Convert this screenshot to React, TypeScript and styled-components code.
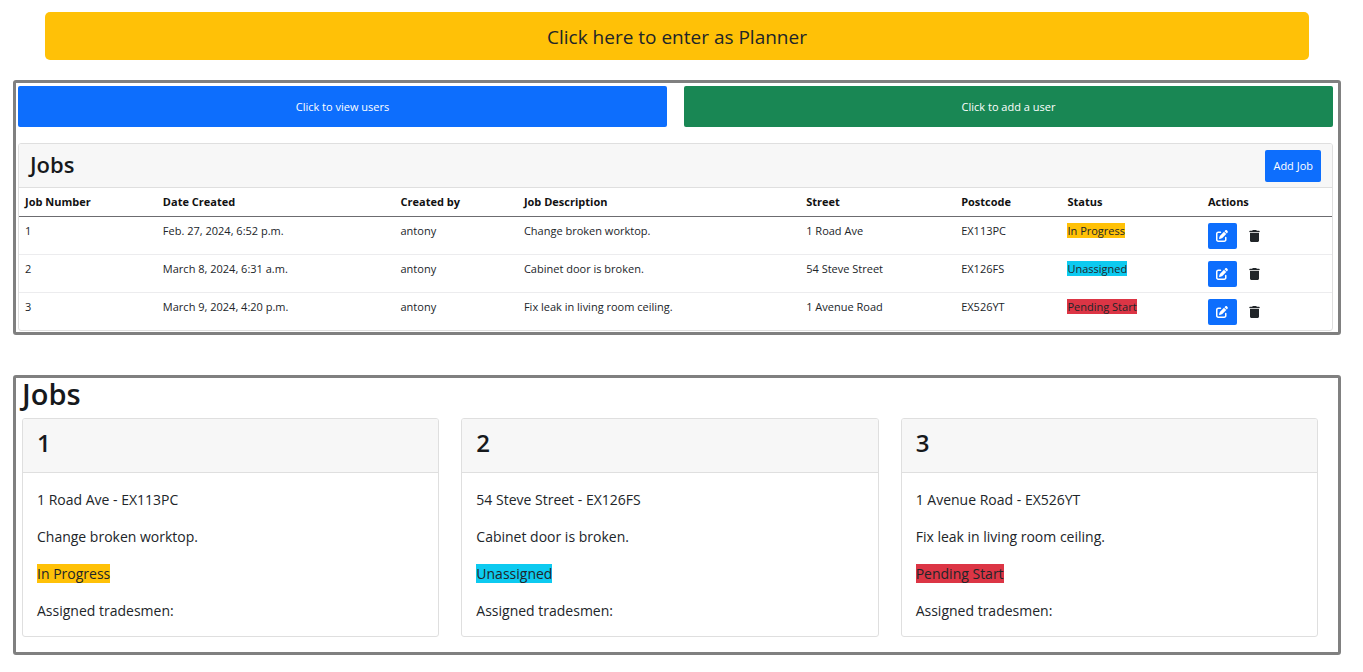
import React from "react";
import styled, { createGlobalStyle } from "styled-components";

const GlobalStyle = createGlobalStyle`
  *, *::before, *::after { box-sizing: border-box; }
  body {
    margin: 0;
    background: #fff;
    color: #212529;
    font-family: "Open Sans", "Noto Sans", sans-serif;
    font-size: 14px;
    line-height: 22px;
  }
  h1, h2, h3, p { margin: 0; }
  h1, h2, h3 { color: #16191c; font-weight: 600; }
  button { font-family: inherit; cursor: pointer; }
`;

type Status = "In Progress" | "Unassigned" | "Pending Start";

interface Job {
  id: number;
  created: string;
  by: string;
  description: string;
  street: string;
  postcode: string;
  status: Status;
}

const jobs: Job[] = [
  { id: 1, created: "Feb. 27, 2024, 6:52 p.m.", by: "antony", description: "Change broken worktop.", street: "1 Road Ave", postcode: "EX113PC", status: "In Progress" },
  { id: 2, created: "March 8, 2024, 6:31 a.m.", by: "antony", description: "Cabinet door is broken.", street: "54 Steve Street", postcode: "EX126FS", status: "Unassigned" },
  { id: 3, created: "March 9, 2024, 4:20 p.m.", by: "antony", description: "Fix leak in living room ceiling.", street: "1 Avenue Road", postcode: "EX526YT", status: "Pending Start" },
];

const columns = [
  { label: "Job Number", width: "10.5%" },
  { label: "Date Created", width: "18.1%" },
  { label: "Created by", width: "9.4%" },
  { label: "Job Description", width: "21.5%" },
  { label: "Street", width: "11.8%" },
  { label: "Postcode", width: "8.1%" },
  { label: "Status", width: "10.7%" },
  { label: "Actions", width: "9.9%" },
];

const statusColors: Record<Status, string> = {
  "In Progress": "#ffc107",
  Unassigned: "#0dcaf0",
  "Pending Start": "#dc3545",
};

const Page = styled.main`
  display: flex;
  flex-direction: column;
  padding: 12px 22px 17px 13px;
`;

const PlannerButton = styled.button`
  height: 48px;
  margin: 0 32px 20px;
  padding: 2px 16px 0;
  border: 0;
  border-radius: 5px;
  background: #ffc107;
  color: #212529;
  font-size: 19px;
`;

const Frame = styled.section`
  border: 3px solid #808080;
  border-radius: 3px;
`;

const AdminFrame = styled(Frame)`
  margin-bottom: 40px;
  padding: 3px 5px 1px 2px;
`;

const BoardFrame = styled(Frame)`
  padding: 0 20px 15px 6px;
`;

const UserActions = styled.div`
  display: grid;
  grid-template-columns: 1fr 1fr;
  gap: 17px;
  margin-bottom: 16px;
`;

const SolidButton = styled.button<{ $color: string }>`
  border: 0;
  border-radius: 2px;
  background: ${(p) => p.$color};
  color: #fff;
  font-size: 11px;
`;

const WideButton = styled(SolidButton)`
  height: 41px;
`;

const AddButton = styled(SolidButton)`
  height: 32px;
  padding: 0 8px;
`;

const Card = styled.article`
  border: 1px solid #dfdfdf;
  border-radius: 3px;
  overflow: hidden;
`;

const TableHeader = styled.header`
  display: flex;
  align-items: center;
  justify-content: space-between;
  height: 44px;
  padding: 0 11px;
  border-bottom: 1px solid #dfdfdf;
  background: #f7f7f7;
`;

const TableTitle = styled.h2`
  padding-bottom: 4px;
  font-size: 22px;
`;

const Table = styled.table`
  width: 100%;
  table-layout: fixed;
  border-collapse: collapse;
  font-size: 11px;
  line-height: 16px;
  text-align: left;
`;

const HeadCell = styled.th`
  height: 28px;
  padding: 0 6px;
  border-bottom: 1px solid #6c6c70;
  color: #111;
  font-weight: 700;
`;

const Cell = styled.td`
  height: 38px;
  padding: 6px 6px 0;
  border-bottom: 1px solid #ececee;
  vertical-align: top;

  tr:last-child > & {
    border-bottom: 0;
  }
`;

const Tag = styled.span<{ $status: Status }>`
  background: ${(p) => statusColors[p.$status]};
`;

const RowActions = styled.div`
  display: flex;
  align-items: center;
  gap: 12px;
`;

const IconButton = styled.button<{ $filled?: boolean }>`
  display: flex;
  align-items: center;
  justify-content: center;
  width: ${(p) => (p.$filled ? "29px" : "11px")};
  height: 26px;
  padding: 0;
  border: 0;
  border-radius: 2px;
  background: ${(p) => (p.$filled ? "#0d6efd" : "transparent")};
  color: ${(p) => (p.$filled ? "#fff" : "#212529")};
`;

const BoardTitle = styled.h1`
  padding-bottom: 8px;
  font-size: 29px;
  line-height: 32px;
`;

const Board = styled.div`
  display: grid;
  grid-template-columns: repeat(3, 1fr);
  gap: 22px;
`;

const CardHeader = styled.header`
  height: 54px;
  padding: 8px 14px;
  border-bottom: 1px solid #dfdfdf;
  background: #f7f7f7;
`;

const CardTitle = styled.h3`
  font-size: 24px;
  line-height: 32px;
`;

const CardBody = styled.div`
  display: flex;
  flex-direction: column;
  gap: 15px;
  padding: 16px 14px 14px;
`;

const EditIcon = () => (
  <svg width="12" height="12" viewBox="0 0 512 512" fill="currentColor" aria-hidden="true">
    <path d="M471.6 21.7c-21.900-21.900-57.300-21.900-79.200 0L362.300 51.700l97.900 97.900 30.100-30.100c21.900-21.900 21.900-57.300 0-79.200L471.600 21.700zm-299.200 220c-6.100 6.100-10.800 13.600-13.500 21.900l-29.600 88.800c-2.900 8.600-.6 18.100 5.800 24.600s15.900 8.700 24.600 5.800l88.800-29.600c8.200-2.700 15.700-7.400 21.900-13.500L437.700 172.300 339.700 74.300 172.400 241.700zM96 64C43 64 0 107 0 160V416c0 53 43 96 96 96H352c53 0 96-43 96-96V320c0-17.700-14.300-32-32-32s-32 14.300-32 32v96c0 17.700-14.300 32-32 32H96c-17.700 0-32-14.300-32-32V160c0-17.700 14.300-32 32-32h96c17.700 0 32-14.300 32-32s-14.300-32-32-32H96z" />
  </svg>
);

const TrashIcon = () => (
  <svg width="11" height="12" viewBox="0 0 448 512" fill="currentColor" aria-hidden="true">
    <path d="M135.200 17.700C140.600 6.800 151.700 0 163.800 0H284.200c12.100 0 23.200 6.800 28.600 17.700L320 32h96c17.700 0 32 14.300 32 32s-14.300 32-32 32H32C14.300 96 0 81.700 0 64S14.300 32 32 32h96l7.200-14.300zM32 128H416V448c0 35.300-28.700 64-64 64H96c-35.300 0-64-28.700-64-64V128z" />
  </svg>
);

export default function App() {
  return (
    <>
      <GlobalStyle />
      <Page>
        <PlannerButton type="button">Click here to enter as Planner</PlannerButton>

        <AdminFrame>
          <UserActions>
            <WideButton type="button" $color="#0d6efd">Click to view users</WideButton>
            <WideButton type="button" $color="#198754">Click to add a user</WideButton>
          </UserActions>
          <Card>
            <TableHeader>
              <TableTitle>Jobs</TableTitle>
              <AddButton type="button" $color="#0d6efd">Add Job</AddButton>
            </TableHeader>
            <Table>
              <colgroup>
                {columns.map((c) => (
                  <col key={c.label} style={{ width: c.width }} />
                ))}
              </colgroup>
              <thead>
                <tr>
                  {columns.map((c) => (
                    <HeadCell key={c.label} scope="col">{c.label}</HeadCell>
                  ))}
                </tr>
              </thead>
              <tbody>
                {jobs.map((job) => (
                  <tr key={job.id}>
                    <Cell>{job.id}</Cell>
                    <Cell>{job.created}</Cell>
                    <Cell>{job.by}</Cell>
                    <Cell>{job.description}</Cell>
                    <Cell>{job.street}</Cell>
                    <Cell>{job.postcode}</Cell>
                    <Cell><Tag $status={job.status}>{job.status}</Tag></Cell>
                    <Cell>
                      <RowActions>
                        <IconButton type="button" $filled aria-label={`Edit job ${job.id}`}><EditIcon /></IconButton>
                        <IconButton type="button" aria-label={`Delete job ${job.id}`}><TrashIcon /></IconButton>
                      </RowActions>
                    </Cell>
                  </tr>
                ))}
              </tbody>
            </Table>
          </Card>
        </AdminFrame>

        <BoardFrame>
          <BoardTitle>Jobs</BoardTitle>
          <Board>
            {jobs.map((job) => (
              <Card key={job.id}>
                <CardHeader>
                  <CardTitle>{job.id}</CardTitle>
                </CardHeader>
                <CardBody>
                  <p>{job.street} - {job.postcode}</p>
                  <p>{job.description}</p>
                  <p><Tag $status={job.status}>{job.status}</Tag></p>
                  <p>Assigned tradesmen:</p>
                </CardBody>
              </Card>
            ))}
          </Board>
        </BoardFrame>
      </Page>
    </>
  );
}
